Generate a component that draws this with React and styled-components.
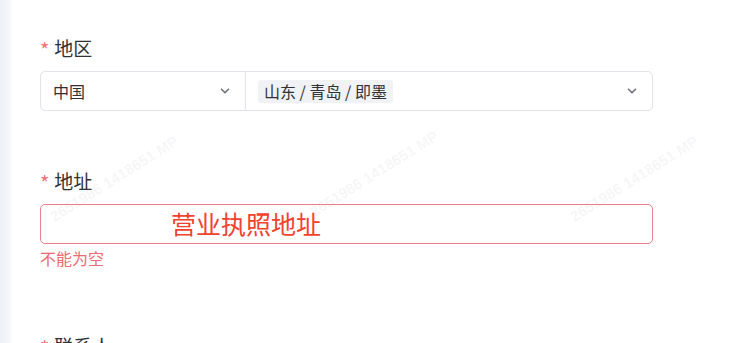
import React from 'react';
import styled, { createGlobalStyle } from 'styled-components';
import { ChevronDown } from 'lucide-react';

const GlobalStyle = createGlobalStyle`
  html, body {
    margin: 0;
    padding: 0;
    background: #ffffff;
    font-family: "Noto Sans CJK SC", "Noto Sans", sans-serif;
  }
`;

const Page = styled.div`
  display: flex;
  width: 740px;
  height: 343px;
  overflow: hidden;
  position: relative;
`;

const SideStrip = styled.div`
  width: 12px;
  flex-shrink: 0;
  background: linear-gradient(90deg, #edf1f6 0%, #f2f5f9 70%, #fbfcfd 100%);
`;

const Form = styled.div`
  flex: 1;
  padding: 35px 0 0 28px;
  box-sizing: border-box;
`;

const FormItem = styled.div`
  width: 613px;
  margin-bottom: ${props => props.gap || 57}px;
  position: relative;
`;

const Label = styled.div`
  display: flex;
  align-items: center;
  height: 24px;
  font-size: 19px;
  color: #303133;
  margin-bottom: 12px;
`;

const Star = styled.span`
  color: #f0707a;
  font-size: 20px;
  line-height: 1;
  margin-right: 5px;
  margin-top: 5px;
`;

const SelectGroup = styled.div`
  display: flex;
  height: 40px;
  border: 1px solid #e1e3e8;
  border-radius: 5px;
  box-sizing: border-box;
`;

const Select = styled.div`
  display: flex;
  align-items: center;
  width: ${props => props.width};
  flex: ${props => (props.grow ? 1 : 'none')};
  padding: 0 13px 0 ${props => props.padLeft || 12}px;
  box-sizing: border-box;
  border-left: ${props => (props.divider ? '1px solid #e1e3e8' : 'none')};
  font-size: 16px;
  color: #303133;
`;

const SelectValue = styled.div`
  flex: 1;
`;

const Tag = styled.span`
  display: inline-flex;
  align-items: center;
  height: 23px;
  padding: 0 6px;
  background: #f0f2f5;
  border-radius: 3px;
  font-size: 16px;
  color: #303133;
`;

const Chevron = styled(ChevronDown)`
  color: #74777e;
  flex-shrink: 0;
`;

const Input = styled.div`
  height: 40px;
  border: 1px solid #ef7f8b;
  border-radius: 5px;
  box-sizing: border-box;
`;

const ErrorText = styled.div`
  font-size: 16px;
  line-height: 22px;
  padding-top: 3px;
  color: #ee6a72;
`;

const Annotation = styled.div`
  position: absolute;
  left: 131px;
  top: 35px;
  height: 40px;
  display: flex;
  align-items: center;
  font-size: 25px;
  color: #f2412c;
  pointer-events: none;
`;

const Watermark = styled.div`
  position: absolute;
  left: ${props => props.x}px;
  top: ${props => props.y}px;
  transform: rotate(-32deg);
  font-family: "Liberation Sans", sans-serif;
  font-size: 15px;
  font-weight: bold;
  color: rgba(160, 166, 176, 0.1);
  white-space: nowrap;
  pointer-events: none;
`;

export default function App() {
  return (
    <Page>
      <GlobalStyle />
      <SideStrip />
      <Form>
        <FormItem>
          <Label><Star>*</Star>地区</Label>
          <SelectGroup>
            <Select width="204px" padLeft={12}>
              <SelectValue>中国</SelectValue>
              <Chevron size={14} strokeWidth={3} />
            </Select>
            <Select grow divider padLeft={12}>
              <SelectValue><Tag>山东 / 青岛 / 即墨</Tag></SelectValue>
              <Chevron size={14} strokeWidth={3} />
            </Select>
          </SelectGroup>
        </FormItem>

        <FormItem gap={64}>
          <Label><Star>*</Star>地址</Label>
          <Input />
          <ErrorText>不能为空</ErrorText>
          <Annotation>营业执照地址</Annotation>
        </FormItem>

        <FormItem>
          <Label><Star>*</Star>联系人</Label>
        </FormItem>
      </Form>
      <Watermark x={40} y={170}>2651986 1418651 MP</Watermark>
      <Watermark x={300} y={165}>2651986 1418651 MP</Watermark>
      <Watermark x={560} y={170}>2651986 1418651 MP</Watermark>
    </Page>
  );
}
